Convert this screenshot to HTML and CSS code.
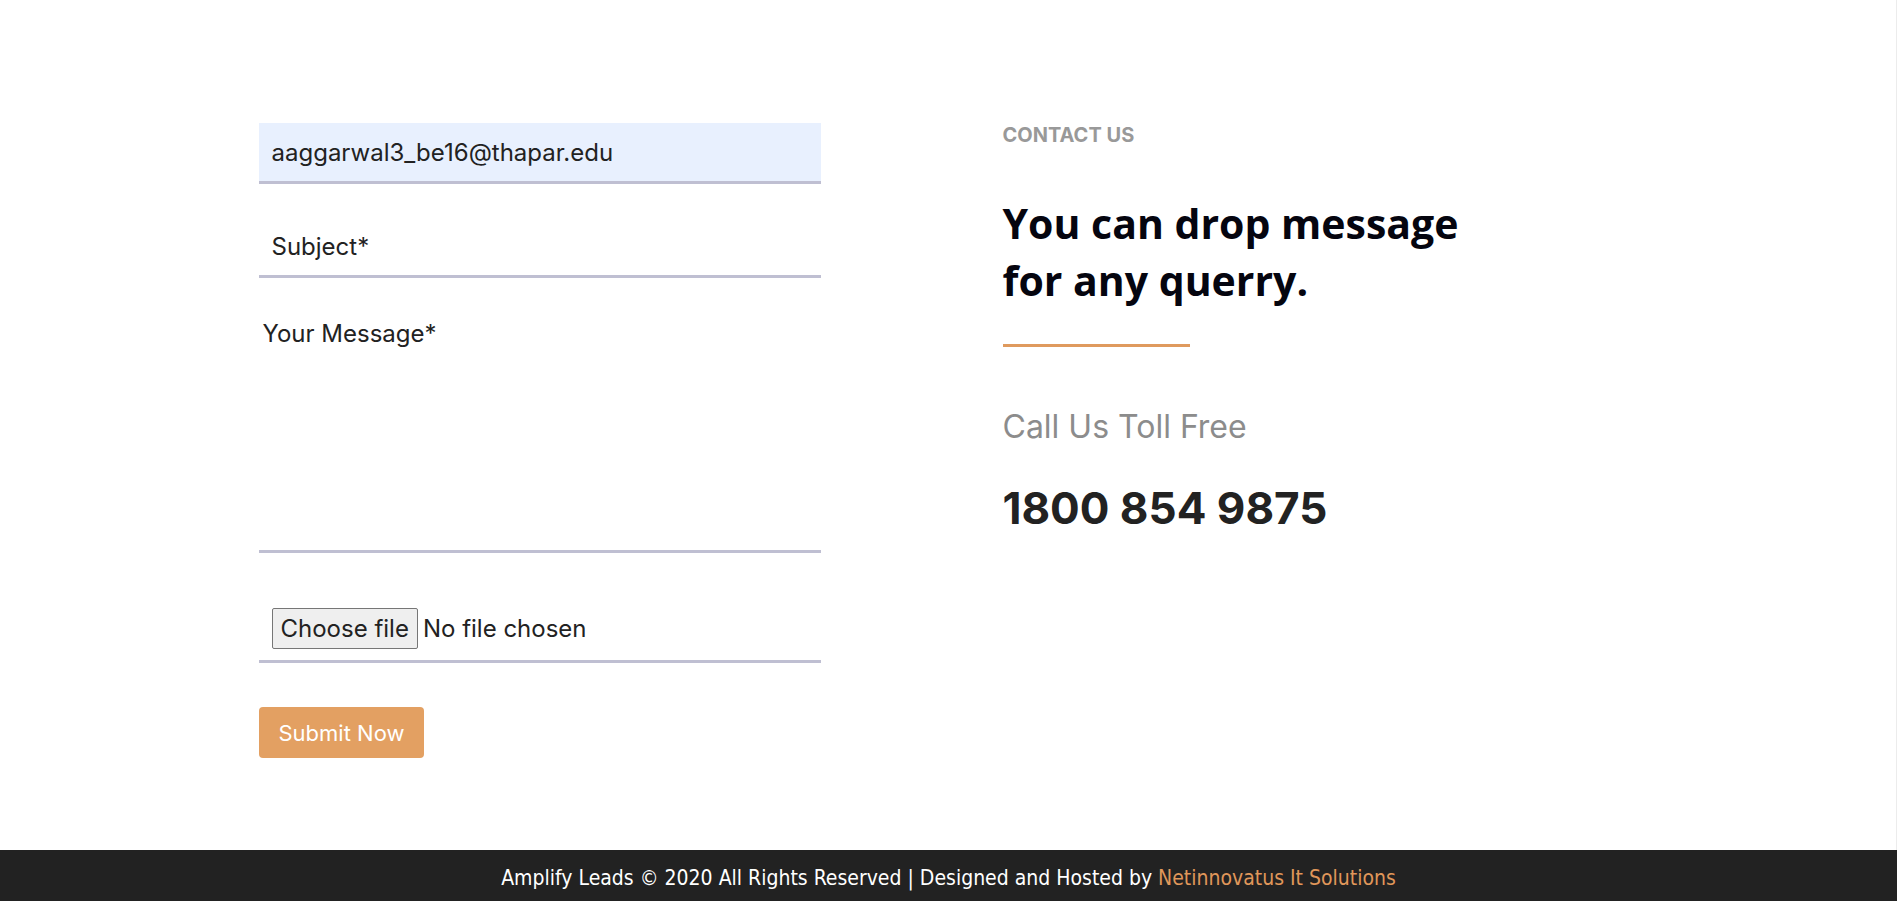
FILE: index.html
```html
<!DOCTYPE html>
<html lang="en">
<head>
<meta charset="utf-8">
<title>Contact Us</title>
<link rel="stylesheet" href="styles.css">
</head>
<body>
<main class="contact">
  <div class="contact__inner">
    <form class="form">
      <input class="field field--filled" type="email" value="aaggarwal3_be16@thapar.edu">
      <input class="field" type="text" placeholder="Subject*">
      <textarea class="field field--area" placeholder="Your Message*"></textarea>
      <div class="file-field">
        <label class="file-btn">Choose file<input class="file-input" type="file"></label>
        <span class="file-name">No file chosen</span>
      </div>
      <button class="submit" type="button">Submit Now</button>
    </form>
    <div class="info">
      <p class="eyebrow">CONTACT US</p>
      <h2 class="title">You can drop message for any querry.</h2>
      <span class="rule"></span>
      <p class="call">Call Us Toll Free</p>
      <p class="phone">1800 854 9875</p>
    </div>
  </div>
</main>
<footer class="footer">Amplify Leads © 2020 All Rights Reserved | Designed and Hosted by <a class="footer__link" href="#">Netinnovatus It Solutions</a></footer>
</body>
</html>
```

FILE: styles.css
```css
* { box-sizing: border-box; }

html, body {
  margin: 0;
  padding: 0;
  background: #ffffff;
}

body {
  font-family: Inter, "Open Sans", sans-serif;
  color: #222222;
}

.contact {
  padding: 123px 0 92px;
  border-right: 1px solid #ececec;
}

.contact__inner {
  width: 1379px;
  margin: 0 auto;
  display: grid;
  grid-template-columns: 562px 1fr;
  column-gap: 182px;
}

.form {
  display: flex;
  flex-direction: column;
  align-items: flex-start;
  gap: 33px;
  margin: 0;
}

.field {
  display: block;
  width: 100%;
  height: 61px;
  margin: 0;
  padding: 0 13px;
  border: 0;
  border-bottom: 3px solid #bfbfd2;
  border-radius: 0;
  background: #ffffff;
  font-family: Inter, sans-serif;
  font-size: 24px;
  color: #222222;
  outline: none;
}

.field::placeholder {
  color: #222222;
  opacity: 1;
}

.field--filled {
  background: #e8f0fe;
}

.field--area {
  height: 242px;
  padding: 8px 4px;
  line-height: normal;
  resize: none;
  overflow: hidden;
}

.file-field {
  width: 100%;
  display: flex;
  align-items: center;
  gap: 5px;
  padding: 22px 13px 11px;
  border-bottom: 3px solid #bfbfd2;
  font-size: 24px;
  line-height: 29px;
  color: #222222;
}

.file-btn {
  position: relative;
  display: block;
  padding: 5px 8px;
  border: 1px solid #767676;
  border-radius: 2px;
  background: #efefef;
  color: #222222;
  cursor: pointer;
}

.file-input {
  display: none;
}

.submit {
  margin-top: 11px;
  height: 51px;
  padding: 0 20px;
  border: 0;
  border-radius: 4px;
  background: #e3a062;
  color: #ffffff;
  font-family: Inter, sans-serif;
  font-size: 22px;
  cursor: pointer;
}

.info p { margin: 0; }

.eyebrow {
  font-size: 20px;
  line-height: 24px;
  font-weight: 700;
  color: #999999;
}

.title {
  max-width: 480px;
  margin: 48px 0 0;
  font-family: "Open Sans", sans-serif;
  font-weight: 700;
  font-size: 41px;
  line-height: 57px;
  color: #05050f;
}

.rule {
  display: block;
  width: 187px;
  height: 3px;
  margin-top: 35px;
  background: #df9a5e;
}

.info .call {
  margin-top: 61px;
  font-size: 32px;
  line-height: 38px;
  font-weight: 400;
  color: #8c8c8c;
}

.info .phone {
  margin-top: 36px;
  font-size: 44px;
  line-height: 52px;
  font-weight: 700;
  color: #222222;
}

.footer {
  height: 51px;
  padding-top: 5px;
  background: #222222;
  color: #ffffff;
  text-align: center;
  font-family: "DejaVu Sans Condensed", "DejaVu Sans", sans-serif;
  font-size: 21px;
  line-height: 46px;
}

.footer__link {
  color: #e0975a;
  text-decoration: none;
}
```
